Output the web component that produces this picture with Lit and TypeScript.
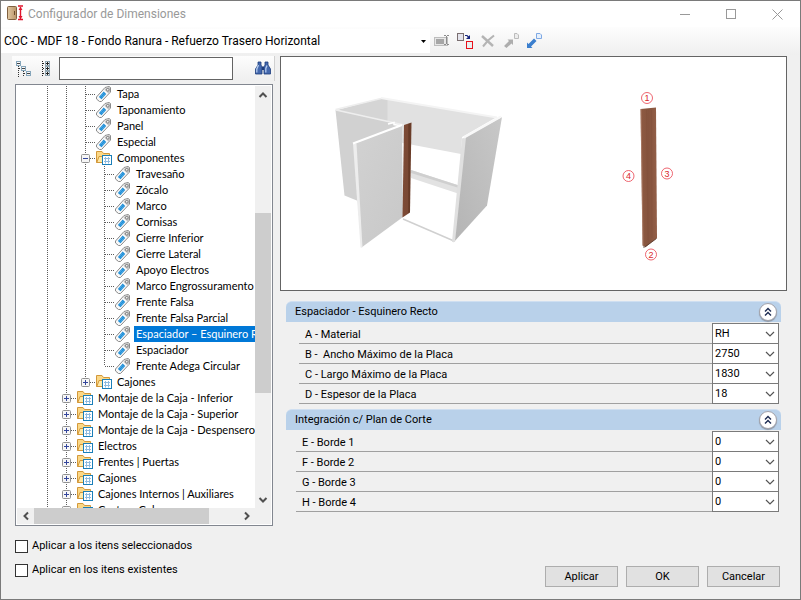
import { LitElement, html, svg, css } from "lit";
import { customElement, state } from "lit/decorators.js";
import { classMap } from "lit/directives/class-map.js";

type Guide = "line" | "tee" | "end";
interface Row {
  text: string;
  guides: Guide[];
  folder?: boolean;
  box?: "+" | "-";
}

const deep = (text: string, last = false): Row => ({ text, guides: ["line", "line", "line", last ? "end" : "tee"] });
const leaf = (text: string): Row => ({ text, guides: ["line", "line", "tee"] });
const top = (text: string): Row => ({ text, guides: ["line", "tee"], folder: true, box: "+" });

const ROWS: Row[] = [
  leaf("Tapa"),
  leaf("Taponamiento"),
  leaf("Panel"),
  leaf("Especial"),
  { text: "Componentes", guides: ["line", "line", "tee"], folder: true, box: "-" },
  deep("Travesaño"),
  deep("Zócalo"),
  deep("Marco"),
  deep("Cornisas"),
  deep("Cierre Inferior"),
  deep("Cierre Lateral"),
  deep("Apoyo Electros"),
  deep("Marco Engrossuramento"),
  deep("Frente Falsa"),
  deep("Frente Falsa Parcial"),
  deep("Espaciador – Esquinero Recto"),
  deep("Espaciador"),
  deep("Frente Adega Circular", true),
  { text: "Cajones", guides: ["line", "line", "end"], folder: true, box: "+" },
  top("Montaje de la Caja - Inferior"),
  top("Montaje de la Caja - Superior"),
  top("Montaje de la Caja - Despensero"),
  top("Electros"),
  top("Frentes | Puertas"),
  top("Cajones"),
  top("Cajones Internos | Auxiliares"),
  top("Costura Cubos"),
];

const GROUPS = [
  {
    title: "Espaciador - Esquinero Recto",
    fields: [
      ["A - Material", "RH"],
      ["B -  Ancho Máximo de la Placa", "2750"],
      ["C - Largo Máximo de la Placa", "1830"],
      ["D - Espesor de la Placa", "18"],
    ],
  },
  {
    title: "Integración c/ Plan de Corte",
    fields: [
      ["E - Borde 1", "0"],
      ["F - Borde 2", "0"],
      ["G - Borde 3", "0"],
      ["H - Borde 4", "0"],
    ],
  },
];

const tagIcon = html`<svg width="17" height="16" viewBox="0 0 17 16">
  <path d="M1.500 11 10 1.500 14 .5 15.500 1.500 15.500 6 6.500 15.500H4.500L1.500 13z" fill="#f8f8f8" stroke="#8a8a8a"/>
  <path d="M11 2 14 1 15 2V6L13.400 7.600 9.400 3.800z" fill="#c4c4c4"/>
  <circle cx="12.800" cy="3.800" r="1.300" fill="#fff" stroke="#666" stroke-width=".8"/>
  <path d="M3.900 11 8.700 5.600 11.200 8 6.500 13.200z" fill="#1f8fd8"/>
  <path d="M5.500 10.500l3-3.200M6.700 11.600l3-3.200" stroke="#7cc3ee" stroke-width=".5"/>
</svg>`;

const folderIcon = html`<svg width="17" height="16" viewBox="0 0 17 16">
  <path d="M1.500 12.500V1.500H7L8.500 3.500H14.500V12.500z" fill="#fbd887" stroke="#d3983a"/>
  <path d="M1.800 12.500 4 6.500H15.500L14 12.500z" fill="#ffe9a8" stroke="#d3983a"/>
  <rect x="7.500" y="5.500" width="9" height="9" fill="#fff" stroke="#1b7fb8"/>
  <path d="M9 8.500h6M9 11.500h6M10.500 7v6.500M13.500 7v6.500" stroke="#8fbbe0"/>
</svg>`;

const expander = (kind: "+" | "-") => html`<svg class="box" width="9" height="9" viewBox="0 0 9 9">
  <rect x=".5" y=".5" width="8" height="8" rx="1" fill="#f6f6f6" stroke="#919191"/>
  <path d=${kind === "+" ? "M2 4.500H7M4.500 2V7" : "M2 4.500H7"} stroke="#33459b"/>
</svg>`;

const chevron = (d: string) => html`<svg width="10" height="10" viewBox="0 0 10 10" fill="none" stroke="#505050" stroke-width="2">
  <path d=${d}/>
</svg>`;

@customElement("app-root")
export class AppRoot extends LitElement {
  static styles = css`
    :host {
      display: flex;
      flex-direction: column;
      height: 100vh;
      min-height: 560px;
      box-sizing: border-box;
      border: 1px solid #7a7a7a;
      background: #f0f0f0;
      color: #000;
      font: 11px/16px Roboto, "Liberation Sans", sans-serif;
    }
    * { box-sizing: border-box; }
    svg { display: block; flex: none; }
    button, input, select { font: inherit; color: inherit; margin: 0; border-radius: 0; }
    .title {
      display: flex;
      align-items: center;
      height: 26px;
      padding-left: 5px;
      background: #fff;
    }
    h1 {
      flex: 1;
      margin: 0 0 0 4px;
      font-size: 12px;
      font-weight: 400;
      color: #999;
    }
    .plain {
      display: grid;
      place-items: center;
      padding: 0;
      border: 0;
      background: none;
    }
    .win { width: 46px; height: 24px; }
    .bar {
      display: flex;
      align-items: center;
      height: 28px;
      background: linear-gradient(#fdfdfd, #efefef);
    }
    .pick { display: grid; width: 429px; height: 24px; }
    .pick > *, .drop > * { grid-area: 1 / 1; }
    .pick select {
      appearance: none;
      border: 0;
      background: #fff;
      padding: 0 20px 0 3px;
      font-size: 12px;
    }
    .pick svg { place-self: center end; margin-right: 4px; pointer-events: none; }
    .tool { width: 23px; height: 24px; }
    .main { display: flex; flex: 1; min-height: 0; padding-top: 1px; }
    .left {
      display: flex;
      flex-direction: column;
      gap: 3px;
      width: 274px;
      padding-left: 11px;
      flex: none;
    }
    .search {
      display: flex;
      align-items: center;
      height: 25px;
      border-right: 1px solid #d0d0d0;
      background: linear-gradient(#fdfdfd, #efefef);
    }
    .search input {
      flex: 1;
      min-width: 0;
      height: 23px;
      margin: 0 18px 0 1px;
      padding: 0 4px;
      border: 1px solid #646464;
      background: #fff;
    }
    .tree {
      display: grid;
      grid-template: minmax(0, 1fr) 16px / minmax(0, 1fr) 16px;
      flex: 1;
      min-height: 0;
      margin: 0 2px 0 3px;
      padding: 1px;
      border: 1px solid #828790;
      background: #fff;
    }
    .rows {
      margin: 0;
      padding: 0 0 0 21px;
      list-style: none;
      overflow: hidden;
      font-family: Lato, sans-serif;
    }
    .row { display: flex; height: 16px; white-space: nowrap; }
    .guide { display: grid; flex: none; width: 19px; height: 16px; }
    .guide > * { grid-area: 1 / 1; }
    .box { place-self: center; margin-right: 1px; }
    .name { margin-left: 3px; padding: 0 2px; }
    .name.on { background: #0078d7; color: #fff; flex: 1; }
    .track { display: flex; background: #f0f0f0; }
    .track.v { flex-direction: column; }
    .cap { flex: none; width: 17px; height: 17px; }
    .track.v .cap { width: 16px; }
    .track.h .cap { height: 16px; }
    .before { flex: 110; }
    .thumb { flex: 180; background: #cdcdcd; }
    .after { flex: 98; }
    .h .thumb { flex: 175; }
    .h .after { flex: 29; }
    .right {
      display: flex;
      flex-direction: column;
      flex: 1;
      min-width: 0;
      padding: 0 13px 0 5px;
    }
    .view { height: 235px; border: 1px solid #646464; background: #fff; }
    .view svg { width: 100%; height: 100%; }
    .groups { display: grid; gap: 6px; padding: 10px 6px 0; }
    .head {
      display: flex;
      align-items: center;
      justify-content: space-between;
      height: 21px;
      padding: 0 4px 0 9px;
      border-top: 1px solid #cfdff1;
      border-radius: 6px 6px 0 0;
      background: #b9d1ea;
    }
    h2 { margin: 0; font-size: 11px; line-height: 16px; font-weight: 400; }
    .round {
      width: 18px;
      height: 18px;
      border: 1px solid #a3a3ab;
      border-radius: 50%;
      background: #fff;
      box-shadow: 0 1px 1px #8c96a4;
    }
    .fields { padding: 1px 2px 0 13px; }
    .fields.wide { padding-left: 10px; }
    .field { display: flex; height: 20px; }
    .field label {
      flex: 1;
      padding: 4px 6px 0;
      line-height: 16px;
      border-bottom: 1px solid #a0a0a0;
      white-space: pre;
      height: 21px;
    }
    .drop { display: grid; width: 67px; height: 21px; }
    .drop select {
      appearance: none;
      min-width: 0;
      padding: 0 18px 0 2px;
      border: 1px solid #7a7a7a;
      background: #fff;
    }
    .drop svg { place-self: center end; margin-right: 4px; pointer-events: none; }
    .foot {
      display: flex;
      justify-content: space-between;
      padding: 13px 20px 12px 14px;
      height: 73px;
    }
    .checks { display: flex; flex-direction: column; gap: 10px; }
    .checks label { display: flex; align-items: center; gap: 4px; height: 14px; }
    .checks input {
      appearance: none;
      width: 13px;
      height: 13px;
      border: 1px solid #333;
      background: #fff;
    }
    .checks input:checked { background: #0078d7; }
    .acts { display: flex; gap: 8px; align-items: flex-end; }
    .acts button {
      width: 73px;
      height: 21px;
      padding: 0;
      border: 1px solid #adadad;
      background: #e1e1e1;
    }
  `;

  @state() private selected = 15;

  private guide(kind: Guide, box?: "+" | "-") {
    return html`<span class="guide">
      <svg width="19" height="16" viewBox="0 0 19 16" stroke="#5c5c5c" stroke-dasharray="1 1">
        <path d=${kind === "end" ? "M9.500 0V8" : "M9.500 0V16"}/>
        ${kind === "line" ? "" : svg`<path d="M10 8.500H19"/>`}
      </svg>
      ${box ? expander(box) : ""}
    </span>`;
  }

  private row(r: Row, i: number) {
    const end = r.guides.length - 1;
    return html`<li class="row" role="treeitem" aria-selected=${i === this.selected} @click=${() => (this.selected = i)}>
      ${r.guides.map((g, n) => this.guide(g, n === end ? r.box : undefined))}
      ${r.folder ? folderIcon : tagIcon}
      <span class=${classMap({ name: true, on: i === this.selected })}>${r.text}</span>
    </li>`;
  }

  private preview() {
    return html`<svg viewBox="281 57 505 233" role="img" aria-label="Vista previa">
      <defs>
        <linearGradient id="side" x1="1" y1="0" x2="0" y2="1"><stop stop-color="#c8c8c8"/><stop offset="1" stop-color="#b4b4b4"/></linearGradient>
        <linearGradient id="door" x1="0" y1="0" x2="1" y2="1"><stop stop-color="#d2d2d2"/><stop offset="1" stop-color="#c8c8c8"/></linearGradient>
        <linearGradient id="wood" x1="0" y1="0" x2="1" y2="0"><stop stop-color="#7d4a35"/><stop offset=".6" stop-color="#7a4934"/><stop offset=".7" stop-color="#633724"/><stop offset="1" stop-color="#6e402c"/></linearGradient>
        <linearGradient id="board" x1="0" y1="0" x2="1" y2="0"><stop stop-color="#8e5a42"/><stop offset=".5" stop-color="#85533d"/><stop offset="1" stop-color="#935f48"/></linearGradient>
      </defs>
      <path d="M382 98.500 496 117.500 462 137 461 154 387 140z" fill="#e1e1e1"/>
      <path d="M337 110 382 98 387.500 100V122z" fill="#d5d5d5"/>
      <path d="M381 98 497 117.500" stroke="#f4f4f4" fill="none" stroke-width="2"/>
      <path d="M411 170 459 185.500 458 193.500 411 178z" fill="#e2e2e2"/>
      <path d="M411 170 459 185.500V188L411 173z" fill="#cfcfcf"/>
      <path d="M335.500 110 403 125 358 201 344.500 195.500z" fill="#d1d1d1"/>
      <path d="M335.500 109.500 381 98.500M336 110 404 125" stroke="#eee" stroke-width="1.500" fill="none"/>
      <path d="M388 124 394 122.500V124.500L400 125.500" stroke="#fff" stroke-width="1.500" fill="none"/>
      <path d="M353 144 402 125 403 217 361.500 247.500z" fill="url(#door)"/>
      <path d="M353 143.500 356.500 143.500 362.500 247.500H360.500z" fill="#ededed"/>
      <path d="M353 143.500 402 125" stroke="#fff" stroke-width="2"/>
      <path d="M403 219 454 241" stroke="#d0d0d0" stroke-width="1.500"/>
      <path d="M464 138 502 117 487 205.500 453.500 242.500z" fill="url(#side)"/>
      <path d="M462 138.500 466 137.500 455 242H452z" fill="#e0e0e0"/>
      <path d="M464 137.500 501 116.500" stroke="#f8f8f8" stroke-width="2.500"/>
      <path d="M404 125 411.500 122.500 410 212.500 402.500 217.500z" fill="url(#wood)"/>
      <path d="M640.500 109 656 107.500 657 238 645.500 247 642.500 245.500z" fill="url(#board)"/>
      <path d="M641 109 643 245.500" stroke="#b98d78" stroke-width=".6"/>
      <path d="M656.500 238.500 645 247H643" stroke="#4f3021" stroke-width=".8" fill="none"/>
      <path d="M646.500 110 648 240M651.500 110 652 238" stroke="#7a4936" stroke-width=".6" opacity=".4"/>
      ${[[1, 647, 98], [3, 667, 173.5], [4, 628.5, 176], [2, 651, 254.5]].map(
        ([n, x, y]) => svg`<circle cx=${x} cy=${y} r="5.500" fill="#fff" stroke="#e8404c" stroke-width=".8"/>
          <text x=${x} y=${y + 3} fill="#d91f2c" font-family="Liberation Sans, sans-serif" font-size="9" text-anchor="middle">${n}</text>`,
      )}
    </svg>`;
  }

  render() {
    return html`
      <header class="title">
        <svg width="18" height="18" viewBox="0 0 18 18">
          <defs><linearGradient id="t"><stop stop-color="#e0c8a2"/><stop offset="1" stop-color="#b99468"/></linearGradient></defs>
          <rect x="1.500" y="1.500" width="9" height="13" rx="1" fill="url(#t)" stroke="#80603f"/>
          <path d="M8.500 6V10" stroke="#6b4c2c"/>
          <path d="M12 1H17M12 14.500H17M14.500 2V14" stroke="#e0142c" stroke-width="1.400"/>
          <path d="M12.500 5 14.500 2 16.500 5zM12.500 11 14.500 14 16.500 11z" fill="#e0142c"/>
        </svg>
        <h1>Configurador de Dimensiones</h1>
        <button class="plain win" aria-label="Minimizar"><svg width="11" height="11" stroke="#999"><path d="M0 5.500H10"/></svg></button>
        <button class="plain win" aria-label="Maximizar"><svg width="11" height="11" fill="none" stroke="#999"><rect x=".5" y=".5" width="9" height="9"/></svg></button>
        <button class="plain win" aria-label="Cerrar"><svg width="11" height="11" stroke="#999"><path d="M.5 .5 10.500 10.500M10.500 .5 .5 10.500"/></svg></button>
      </header>
      <div class="bar">
        <div class="pick">
          <select aria-label="Configuración"><option>COC - MDF 18 - Fondo Ranura - Refuerzo Trasero Horizontal</option></select>
          <svg width="5" height="3"><path d="M0 0H5L2.500 3z"/></svg>
        </div>
        <button class="plain tool" aria-label="Renombrar"><svg width="16" height="16" viewBox="0 0 16 16" fill="none">
          <rect x=".5" y="4.500" width="13" height="8" fill="#e6e6e6" stroke="#bdbdbd"/><rect x="2" y="6" width="8" height="5" fill="#a6a6a6"/>
          <path d="M10 2.500H12M13 2.500H15M12.500 3V11M10 11.500H12M13 11.500H15" stroke="#8c8c8c"/></svg></button>
        <button class="plain tool" aria-label="Reemplazar"><svg width="16" height="16" viewBox="0 0 16 16" fill="none">
          <rect x=".5" y=".5" width="6" height="7" fill="#e4e4ec" stroke="#7a6e70"/><rect x="9.500" y="8.500" width="6" height="7" fill="#e8f2f2" stroke="#e8101a"/>
          <path d="M8 2.500H10L12.500 5" stroke="#16257e" stroke-width="1.200"/><path d="M13 2V6H9z" fill="#16257e"/></svg></button>
        <button class="plain tool" aria-label="Eliminar"><svg width="16" height="16" viewBox="0 0 16 16" fill="none" stroke="#b4b4b4">
          <path d="M2 3 13 13" stroke-width="2.400"/><path d="M14 2.500 8 7.500 3 13.500" stroke-width="2"/></svg></button>
        <button class="plain tool" aria-label="Exportar"><svg width="16" height="16" viewBox="0 0 16 16">
          <path d="M1 13 6 8 4.500 6.500H10V12L8.500 10.500 3.500 15z" fill="#adadad"/><path d="M11.500 .5H14L15.500 2V5.500H11.500z" fill="#ededed" stroke="#bcbcbc"/></svg></button>
        <button class="plain tool" aria-label="Importar"><svg width="16" height="16" viewBox="0 0 16 16">
          <path d="M1 15V9.500L2.500 11 8 5.500 10.500 8 5 13.500 6.500 15z" fill="#3b7fce"/><path d="M10.500 .5H14L15.500 2V5.500H10.500z" fill="#e6f0fc" stroke="#7fa9e4"/></svg></button>
      </div>
      <main class="main">
        <section class="left">
          <div class="search">
            <button class="plain tool" aria-label="Contraer todo"><svg width="16" height="16" viewBox="0 0 16 16" fill="none" stroke="#86a6bb">
              <path d="M2.500 5V16M7.500 10V16M3 7.500H5M8 12.500H10" stroke="#333" stroke-dasharray="1 1"/>
              <rect x=".5" y=".5" width="4" height="4"/><rect x="5.500" y="5.500" width="4" height="4"/><rect x="10.500" y="10.500" width="4" height="4"/>
              <path d="M1 2.500H4M6 7.500H9M11 12.500H14" stroke="#444"/></svg></button>
            <button class="plain tool" aria-label="Expandir todo"><svg width="11" height="16" viewBox="0 0 11 16" fill="none" stroke="#8fa4b0">
              <path d="M1.500 0V16M2 2.500H4M2 7.500H4M2 12.500H4" stroke="#222" stroke-dasharray="1 1"/>
              <rect x="4.500" y=".5" width="4" height="4"/><rect x="4.500" y="5.500" width="4" height="4"/><rect x="4.500" y="10.500" width="4" height="4"/>
              <path d="M5 2.500H8M6.500 1V4M5 7.500H8M6.500 6V9M5 12.500H8M6.500 11V14" stroke="#222"/></svg></button>
            <input type="text" aria-label="Buscar" />
            <button class="plain tool" aria-label="Buscar"><svg width="16" height="16" viewBox="0 0 16 16">
              <path d="M3 1H6V4L7 6V13H.5V8L3 4zM10 1H13V4L15.500 8V13H9V6L10 4z" fill="#4468ad" stroke="#1d3c7c" stroke-width=".8"/>
              <path d="M7 5.500H9V9H7z" fill="#1d3c7c"/><path d="M3.500 4 1.800 8V11.500M12 4.500 10.800 7.500V11.500" stroke="#b4cbef" stroke-width="1.300" fill="none"/></svg></button>
          </div>
          <div class="tree">
            <ul class="rows" role="tree">${ROWS.map((r, i) => this.row(r, i))}</ul>
            <div class="track v">
              <button class="plain cap" aria-label="Subir">${chevron("M1.500 7 5 3.500 8.500 7")}</button>
              <span class="before"></span><span class="thumb"></span><span class="after"></span>
              <button class="plain cap" aria-label="Bajar">${chevron("M1.500 3 5 6.500 8.500 3")}</button>
            </div>
            <div class="track h">
              <button class="plain cap" aria-label="Izquierda">${chevron("M7 1.500 3.500 5 7 8.500")}</button>
              <span class="thumb"></span><span class="after"></span>
              <button class="plain cap" aria-label="Derecha">${chevron("M3 1.500 6.500 5 3 8.500")}</button>
            </div>
            <div class="track"></div>
          </div>
        </section>
        <section class="right">
          <div class="view">${this.preview()}</div>
          <div class="groups">
            ${GROUPS.map(
              (g, gi) => html`<section>
                <div class="head">
                  <h2>${g.title}</h2>
                  <button class="plain round" aria-label="Contraer"><svg width="8" height="10" viewBox="0 0 8 10" fill="none" stroke="#1c2b52" stroke-width="1.400">
                    <path d="M1 4.500 4 1.500 7 4.500M1 8.500 4 5.500 7 8.500"/></svg></button>
                </div>
                <div class=${classMap({ fields: true, wide: gi === 1 })}>
                  ${g.fields.map(
                    ([label, value], fi) => html`<div class="field">
                      <label for="f${gi}${fi}">${label}</label>
                      <div class="drop">
                        <select id="f${gi}${fi}"><option>${value}</option></select>
                        <svg width="10" height="6" fill="none" stroke="#555" stroke-width="1.200"><path d="M1 1 5 5 9 1"/></svg>
                      </div>
                    </div>`,
                  )}
                </div>
              </section>`,
            )}
          </div>
        </section>
      </main>
      <footer class="foot">
        <div class="checks">
          <label><input type="checkbox" />Aplicar a los itens seleccionados</label>
          <label><input type="checkbox" />Aplicar en los itens existentes</label>
        </div>
        <div class="acts"><button>Aplicar</button><button>OK</button><button>Cancelar</button></div>
      </footer>
    `;
  }
}
